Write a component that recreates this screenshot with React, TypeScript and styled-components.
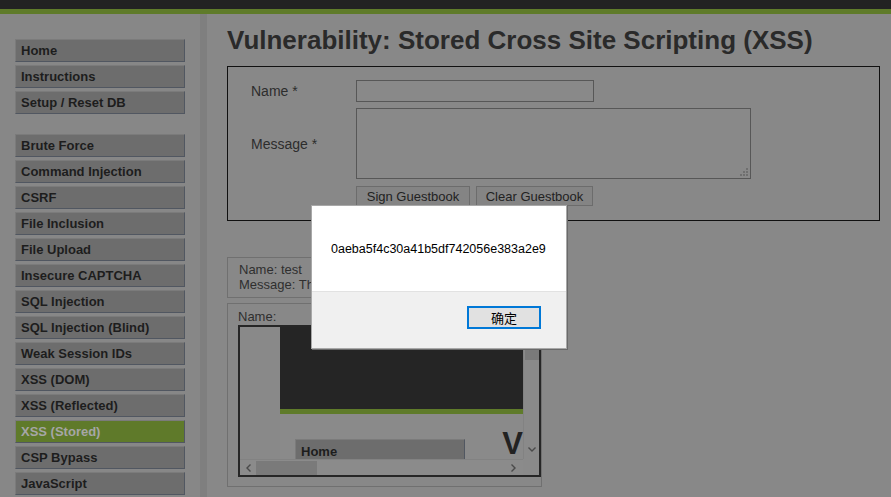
import React from "react";
import styled, { createGlobalStyle } from "styled-components";

const GlobalStyle = createGlobalStyle`
  html, body {
    margin: 0;
    padding: 0;
    background: #888888;
    overflow: hidden;
    font-family: "Liberation Sans", Arial, sans-serif;
  }
  * { box-sizing: border-box; }
`;

const Page = styled.div`
  position: relative;
  width: 891px;
  height: 497px;
  overflow: hidden;
  background: #888888;
`;

const Header = styled.div`
  height: 14px;
  background: #222222;
  border-bottom: 5px solid #5f7b2a;
`;

const Body = styled.div`
  display: flex;
  align-items: stretch;
  height: 483px;
`;

const Sidebar = styled.nav`
  width: 207px;
  flex: none;
  background: #878787;
  border-right: 7px solid #7f7f7f;
  padding: 25px 0 0 15px;
  display: flex;
  flex-direction: column;
`;

const MenuGroup = styled.div`
  display: flex;
  flex-direction: column;
  gap: 3px;
  & + & {
    margin-top: 20px;
  }
`;

const MenuItem = styled.div<{ $active?: boolean }>`
  width: 170px;
  height: 23px;
  padding-left: 5px;
  display: flex;
  align-items: center;
  font-size: 13px;
  font-weight: bold;
  color: ${(p) => (p.$active ? "#a6a6a6" : "#1d1d1d")};
  background: ${(p) => (p.$active ? "#5f7a2a" : "#6d6d6d")};
  border: 1px solid;
  border-color: #7b7b7b #515761 #515761 #7b7b7b;
  white-space: nowrap;
`;

const Main = styled.main`
  flex: 1;
  padding: 13px 11px 0 20px;
  min-width: 0;
`;

const Title = styled.h1`
  margin: 0 0 12px 0;
  font-family: "Liberation Sans Narrow", "Liberation Sans", Arial, sans-serif;
  font-size: 26px;
  line-height: 27px;
  font-weight: bold;
  color: #2a2a2a;
  white-space: nowrap;
`;

const FormBox = styled.div`
  border: 1px solid #111111;
  padding: 13px 0 14px 23px;
  display: grid;
  grid-template-columns: 105px auto;
  grid-auto-rows: auto;
  row-gap: 6px;
  justify-content: start;
`;

const Label = styled.div`
  font-size: 14px;
  color: #2d2d2d;
  display: flex;
  align-items: center;
`;

const TextInput = styled.div`
  width: 238px;
  height: 22px;
  border: 1px solid #575757;
  background: #898989;
`;

const TextArea = styled.div`
  position: relative;
  width: 395px;
  height: 71px;
  border: 1px solid #575757;
  background: #898989;
`;

const Grip = styled.svg`
  position: absolute;
  right: 2px;
  bottom: 2px;
`;

const ButtonRow = styled.div`
  grid-column: 2;
  display: flex;
  gap: 6px;
  margin-top: 1px;
`;

const Button = styled.div<{ $w: number }>`
  width: ${(p) => p.$w}px;
  height: 20px;
  background: #848484;
  border: 1px solid #6c6c6c;
  font-size: 13px;
  color: #222222;
  display: flex;
  align-items: center;
  justify-content: center;
  white-space: nowrap;
`;

const Entries = styled.div`
  margin-top: 36px;
  display: flex;
  flex-direction: column;
  gap: 5px;
`;

const EntryBox = styled.div<{ $pb: number }>`
  width: 315px;
  border: 1px solid #707070;
  padding: 4px 0 ${(p) => p.$pb}px 11px;
  font-size: 13px;
  line-height: 15px;
  color: #2f2f2f;
  white-space: nowrap;
  overflow: hidden;
`;

const FrameBox = styled.div`
  width: 315px;
  border: 1px solid #707070;
  padding: 5px 0 9px 10px;
  font-size: 13px;
  line-height: 15px;
  color: #2f2f2f;
`;

const Frame = styled.div`
  margin-top: 1px;
  width: 303px;
  height: 152px;
  border: 2px solid #262626;
  display: grid;
  grid-template-columns: 1fr 16px;
  grid-template-rows: 1fr 16px;
  background: #8a8a8a;
`;

const FrameView = styled.div`
  min-width: 0;
  min-height: 0;
  display: grid;
  grid-template-columns: 40px 1fr;
`;

const MiniLeft = styled.div`
  background: #898989;
`;

const MiniPage = styled.div`
  display: flex;
  flex-direction: column;
  min-width: 0;
`;

const MiniHeader = styled.div`
  height: 87px;
  flex: none;
  background: #252525;
  border-bottom: 5px solid #5f7b2a;
`;

const MiniBody = styled.div`
  display: flex;
  justify-content: space-between;
  padding: 25px 0 0 15px;
  height: 40px;
`;

const MiniMenuItem = styled.div`
  width: 170px;
  height: 20px;
  padding-left: 5px;
  font-size: 13px;
  font-weight: bold;
  color: #1d1d1d;
  background: #6d6d6d;
  border: 1px solid;
  border-bottom: none;
  border-color: #7b7b7b #515761 #515761 #7b7b7b;
  display: flex;
  align-items: flex-end;
  flex: none;
`;

const MiniTitle = styled.div`
  font-family: "Liberation Sans Narrow", "Liberation Sans", Arial, sans-serif;
  font-size: 31px;
  font-weight: bold;
  color: #222222;
  line-height: 24px;
  height: 24px;
  margin-top: -7px;
`;

const VScroll = styled.div`
  background: #8a8a8a;
  border-left: 1px solid #828282;
  display: flex;
  flex-direction: column;
  align-items: center;
`;

const VThumb = styled.div`
  margin-top: 22px;
  width: 14px;
  height: 11px;
  background: #7a7a7a;
`;

const VArrow = styled.svg`
  margin-top: auto;
  margin-bottom: 7px;
`;

const HScroll = styled.div`
  background: #8b8b8b;
  border-top: 1px solid #828282;
  display: flex;
  align-items: center;
  padding: 0 6px;
`;

const HThumb = styled.div`
  margin-left: 5px;
  width: 61px;
  height: 14px;
  background: #7a7a7a;
`;

const HArrowRight = styled.svg`
  margin-left: auto;
  margin-right: 1px;
`;

const Corner = styled.div`
  background: #8a8a8a;
`;

const Dialog = styled.div`
  position: absolute;
  left: 311px;
  top: 205px;
  width: 256px;
  height: 144px;
  background: #ffffff;
  border: 1px solid #a8a8a8;
  box-shadow: 1px 1px 0 #6a6a6a;
  display: flex;
  flex-direction: column;
`;

const DialogMessage = styled.div`
  height: 86px;
  display: flex;
  align-items: center;
  padding-left: 19px;
  font-size: 12.5px;
  color: #000000;
  border-bottom: 1px solid #e2e2e2;
`;

const DialogFooter = styled.div`
  flex: 1;
  background: #f0f0f0;
  display: flex;
  justify-content: flex-end;
  align-items: flex-start;
  padding: 14px 25px 0 0;
`;

const OkButton = styled.div`
  width: 74px;
  height: 23px;
  border: 2px solid #0078d7;
  background: #e1e1e1;
  display: flex;
  align-items: center;
  justify-content: center;
  font-family: "Noto Sans CJK SC", "Liberation Sans", sans-serif;
  font-size: 13px;
  color: #000000;
`;

const groups = [
  ["Home", "Instructions", "Setup / Reset DB"],
  [
    "Brute Force",
    "Command Injection",
    "CSRF",
    "File Inclusion",
    "File Upload",
    "Insecure CAPTCHA",
    "SQL Injection",
    "SQL Injection (Blind)",
    "Weak Session IDs",
    "XSS (DOM)",
    "XSS (Reflected)",
    "XSS (Stored)",
    "CSP Bypass",
    "JavaScript",
  ],
];

export default function App() {
  return (
    <>
      <GlobalStyle />
      <Page>
        <Header />
        <Body>
          <Sidebar>
            {groups.map((g, i) => (
              <MenuGroup key={i}>
                {g.map((item) => (
                  <MenuItem key={item} $active={item === "XSS (Stored)"}>
                    {item}
                  </MenuItem>
                ))}
              </MenuGroup>
            ))}
          </Sidebar>
          <Main>
            <Title>Vulnerability: Stored Cross Site Scripting (XSS)</Title>
            <FormBox>
              <Label>Name *</Label>
              <TextInput />
              <Label>Message *</Label>
              <TextArea>
                <Grip width="8" height="8" viewBox="0 0 8 8">
                  <rect x="6" y="0" width="2" height="2" fill="#6f6f6f" />
                  <rect x="3" y="3" width="2" height="2" fill="#6f6f6f" />
                  <rect x="6" y="3" width="2" height="2" fill="#6f6f6f" />
                  <rect x="0" y="6" width="2" height="2" fill="#6f6f6f" />
                  <rect x="3" y="6" width="2" height="2" fill="#6f6f6f" />
                  <rect x="6" y="6" width="2" height="2" fill="#6f6f6f" />
                </Grip>
              </TextArea>
              <ButtonRow>
                <Button $w={114}>Sign Guestbook</Button>
                <Button $w={117}>Clear Guestbook</Button>
              </ButtonRow>
            </FormBox>
            <Entries>
              <EntryBox $pb={5}>
                Name: test
                <br />
                Message: This is a test comment.
              </EntryBox>
              <FrameBox>
                Name:
                <Frame>
                  <FrameView>
                    <MiniLeft />
                    <MiniPage>
                      <MiniHeader />
                      <MiniBody>
                        <MiniMenuItem>Home</MiniMenuItem>
                        <MiniTitle>V</MiniTitle>
                      </MiniBody>
                    </MiniPage>
                  </FrameView>
                  <VScroll>
                    <VThumb />
                    <VArrow width="8" height="5" viewBox="0 0 8 5">
                      <path d="M0.5 0.5 L4 4 L7.5 0.5" fill="none" stroke="#4a4a4a" strokeWidth="1.4" />
                    </VArrow>
                  </VScroll>
                  <HScroll>
                    <svg width="5" height="8" viewBox="0 0 5 8">
                      <path d="M4.5 0.5 L1 4 L4.5 7.5" fill="none" stroke="#4a4a4a" strokeWidth="1.4" />
                    </svg>
                    <HThumb />
                    <HArrowRight width="5" height="8" viewBox="0 0 5 8">
                      <path d="M0.5 0.5 L4 4 L0.5 7.5" fill="none" stroke="#4a4a4a" strokeWidth="1.4" />
                    </HArrowRight>
                  </HScroll>
                  <Corner />
                </Frame>
              </FrameBox>
            </Entries>
          </Main>
        </Body>
        <Dialog role="alertdialog">
          <DialogMessage>0aeba5f4c30a41b5df742056e383a2e9</DialogMessage>
          <DialogFooter>
            <OkButton>确定</OkButton>
          </DialogFooter>
        </Dialog>
      </Page>
    </>
  );
}
